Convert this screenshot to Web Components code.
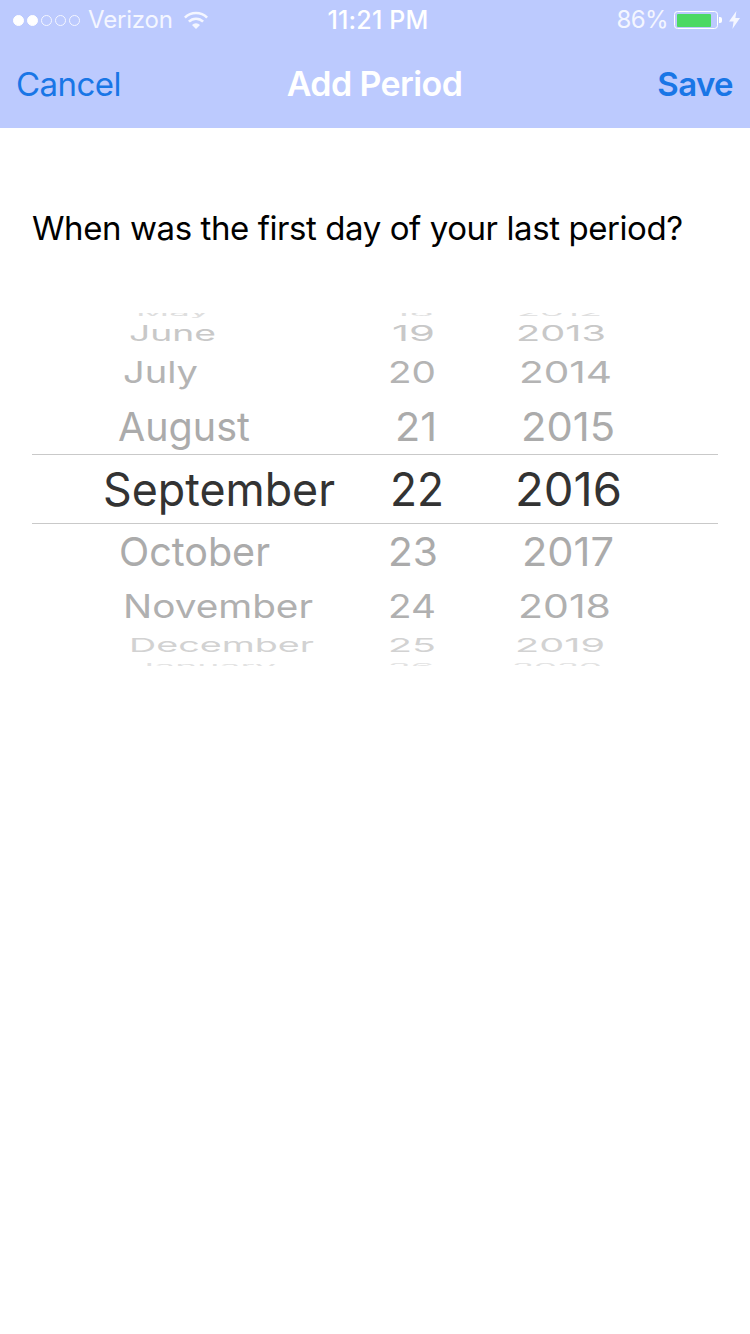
<!DOCTYPE html>
<html lang="en">
<head>
<meta charset="utf-8">
<title>Add Period</title>
<style>
html,body{margin:0;padding:0;background:#fff}
body{width:750px;height:1334px;overflow:hidden;font-family:Inter,"Liberation Sans",sans-serif}
</style>
</head>
<body>
<period-screen></period-screen>
<script>
class StatusBar extends HTMLElement{
  constructor(){super();this.attachShadow({mode:'open'}).innerHTML=`
  <style>
    :host{display:grid;grid-template-columns:1fr auto 1fr;align-items:center;height:40px;padding:0 10px 0 13px;box-sizing:border-box;color:#f4f6ff;font:400 24px/40px Inter,"Liberation Sans",sans-serif;letter-spacing:-.6px}
    .l,.r{display:flex;align-items:center}
    .r{justify-content:flex-end}
    .dots{display:flex;gap:3px}
    .dots i{width:11px;height:11px;border-radius:50%;box-sizing:border-box;border:1.2px solid #f4f6ff}
    .dots i.on{background:#fff;border-color:#fff}
    .carrier{margin-left:8px;letter-spacing:-.2px}
    .wifi{margin-left:11px;display:block}
    .time{font-weight:500;color:#fff;font-size:25px;letter-spacing:.2px;margin-left:3px}
    .batt{position:relative;margin-left:6px;width:44px;height:18px;box-sizing:border-box;border:1.2px solid #fff;border-radius:3.5px;padding:1.5px}
    .batt b{display:block;height:100%;width:34px;background:#4cd964;border-radius:1px}
    .nub{width:3px;height:6px;background:#fff;border-radius:0 2px 2px 0;margin-left:1px}
    .bolt{margin-left:7px;display:block}
  </style>
  <div class="l">
    <div class="dots"><i class="on"></i><i class="on"></i><i></i><i></i><i></i></div>
    <span class="carrier">Verizon</span>
    <svg class="wifi" width="24" height="18" viewBox="0 0 24 18" fill="none" stroke="#f4f6ff">
      <path d="M.9 6.6a15.7 15.7 0 0 1 22.2 0" stroke-width="2.6"/>
      <path d="M4.9 10.7a10 10 0 0 1 14.2 0" stroke-width="2.6"/>
      <path d="M8 13.9a5.6 5.6 0 0 1 8 0L12 18z" fill="#f4f6ff" stroke="none"/>
    </svg>
  </div>
  <span class="time">11:21 PM</span>
  <div class="r">
    <span>86%</span>
    <div class="batt"><b></b></div>
    <div class="nub"></div>
    <svg class="bolt" width="11" height="18" viewBox="0 0 11 18"><path d="M7.4 0 0 10.6h4.6L3.4 18 11 7H6.4z" fill="#f4f6ff"/></svg>
  </div>`}
}
class NavBar extends HTMLElement{
  constructor(){super();this.attachShadow({mode:'open'}).innerHTML=`
  <style>
    :host{display:grid;grid-template-columns:1fr auto 1fr;align-items:center;height:88px;padding:0 17px 0 16px;box-sizing:border-box;font:400 33px/88px Inter,"Liberation Sans",sans-serif}
    .c{color:#1976e6;letter-spacing:-.55px}
    .t{color:#fff;font-weight:600;letter-spacing:-.6px;font-size:34px}
    .s{color:#1976e6;font-weight:600;text-align:right;letter-spacing:-.6px}
  </style>
  <span class="c">Cancel</span><span class="t">Add Period</span><span class="s">Save</span>`}
}
class WheelCell extends HTMLElement{
  constructor(){super();this.attachShadow({mode:'open'}).innerHTML=`
  <style>
    :host{display:flex;align-items:center;white-space:nowrap;min-width:0;min-height:0}
    span{display:inline-block;transform-origin:left center}
  </style><span><slot></slot></span>`}
  connectedCallback(){
    const s=this.shadowRoot.querySelector('span');
    s.style.marginLeft=this.getAttribute('pad')+'px';
    const w=s.getBoundingClientRect().width;
    s.style.transform=`scale(${+this.getAttribute('w')/w},${this.getAttribute('sy')})`;
  }
}
class DatePicker extends HTMLElement{
  constructor(){super();
    const rows=[
      [18,.2,'#dedede',0,['May',136,74],['18',393,41],['2012',517,85]],
      [22,.46,'#c8c8c8',0,['June',129,87],['19',392,43],['2013',516,90]],
      [56,.66,'#b4b4b4',0,['July',123,75],['20',388,48],['2014',519,93]],
      [54,.87,'#ababab',2,['August',118,132],['21',395,42],['2015',521,94]],
      [70,1,'#333',0,['September',103,232],['22',390,54],['2016',515,107]],
      [57,.87,'#ababab',4,['October',119,151],['23',388,50],['2017',522,92]],
      [50,.7,'#b0b0b0',0,['November',123,190],['24',388,48],['2018',518,93]],
      [28,.42,'#d2d2d2',0,['December',129,185],['25',388,48],['2019',515,90]],
      [16,.2,'#e2e2e2',0,['January',133,143],['26',388,46],['2020',512,90]],
    ];
    const starts=[32,372,500];
    const html=rows.map(([h,sy,c,pb,...cells],i)=>`<div class="row${i==4?' sel':''}" style="height:${h}px;color:${c};padding-bottom:${pb}px">`+
      cells.map(([t,x,w],k)=>`<wheel-cell pad="${x-starts[k]}" w="${w}" sy="${sy}">${t}</wheel-cell>`).join('')+`</div>`).join('');
    this.attachShadow({mode:'open'}).innerHTML=`
    <style>
      :host{display:block;height:353px;margin:0 32px;overflow:hidden;font:400 46px/1 Inter,"Liberation Sans",sans-serif}
      .wheel{margin-top:-9px}
      .row{display:grid;grid-template-columns:340px 128px 1fr;grid-template-rows:100%;box-sizing:border-box}
      .sel{border-top:1px solid #c9c9c9;border-bottom:1px solid #c9c9c9}
    </style><div class="wheel">${html}</div>`;
  }
}
class PeriodScreen extends HTMLElement{
  constructor(){super();this.attachShadow({mode:'open'}).innerHTML=`
  <style>
    :host{display:block;width:750px;height:1334px;background:#fff}
    header{background:#bccafe}
    p{margin:0;padding:80px 0 65px 32px;font:400 33px/40px Inter,"Liberation Sans",sans-serif;color:#000;letter-spacing:-.42px;white-space:nowrap}
  </style>
  <header><status-bar></status-bar><nav-bar></nav-bar></header>
  <p>When was the first day of your last period?</p>
  <date-picker></date-picker>`}
}
customElements.define('wheel-cell',WheelCell);
customElements.define('status-bar',StatusBar);
customElements.define('nav-bar',NavBar);
customElements.define('date-picker',DatePicker);
customElements.define('period-screen',PeriodScreen);
</script>
</body>
</html>
